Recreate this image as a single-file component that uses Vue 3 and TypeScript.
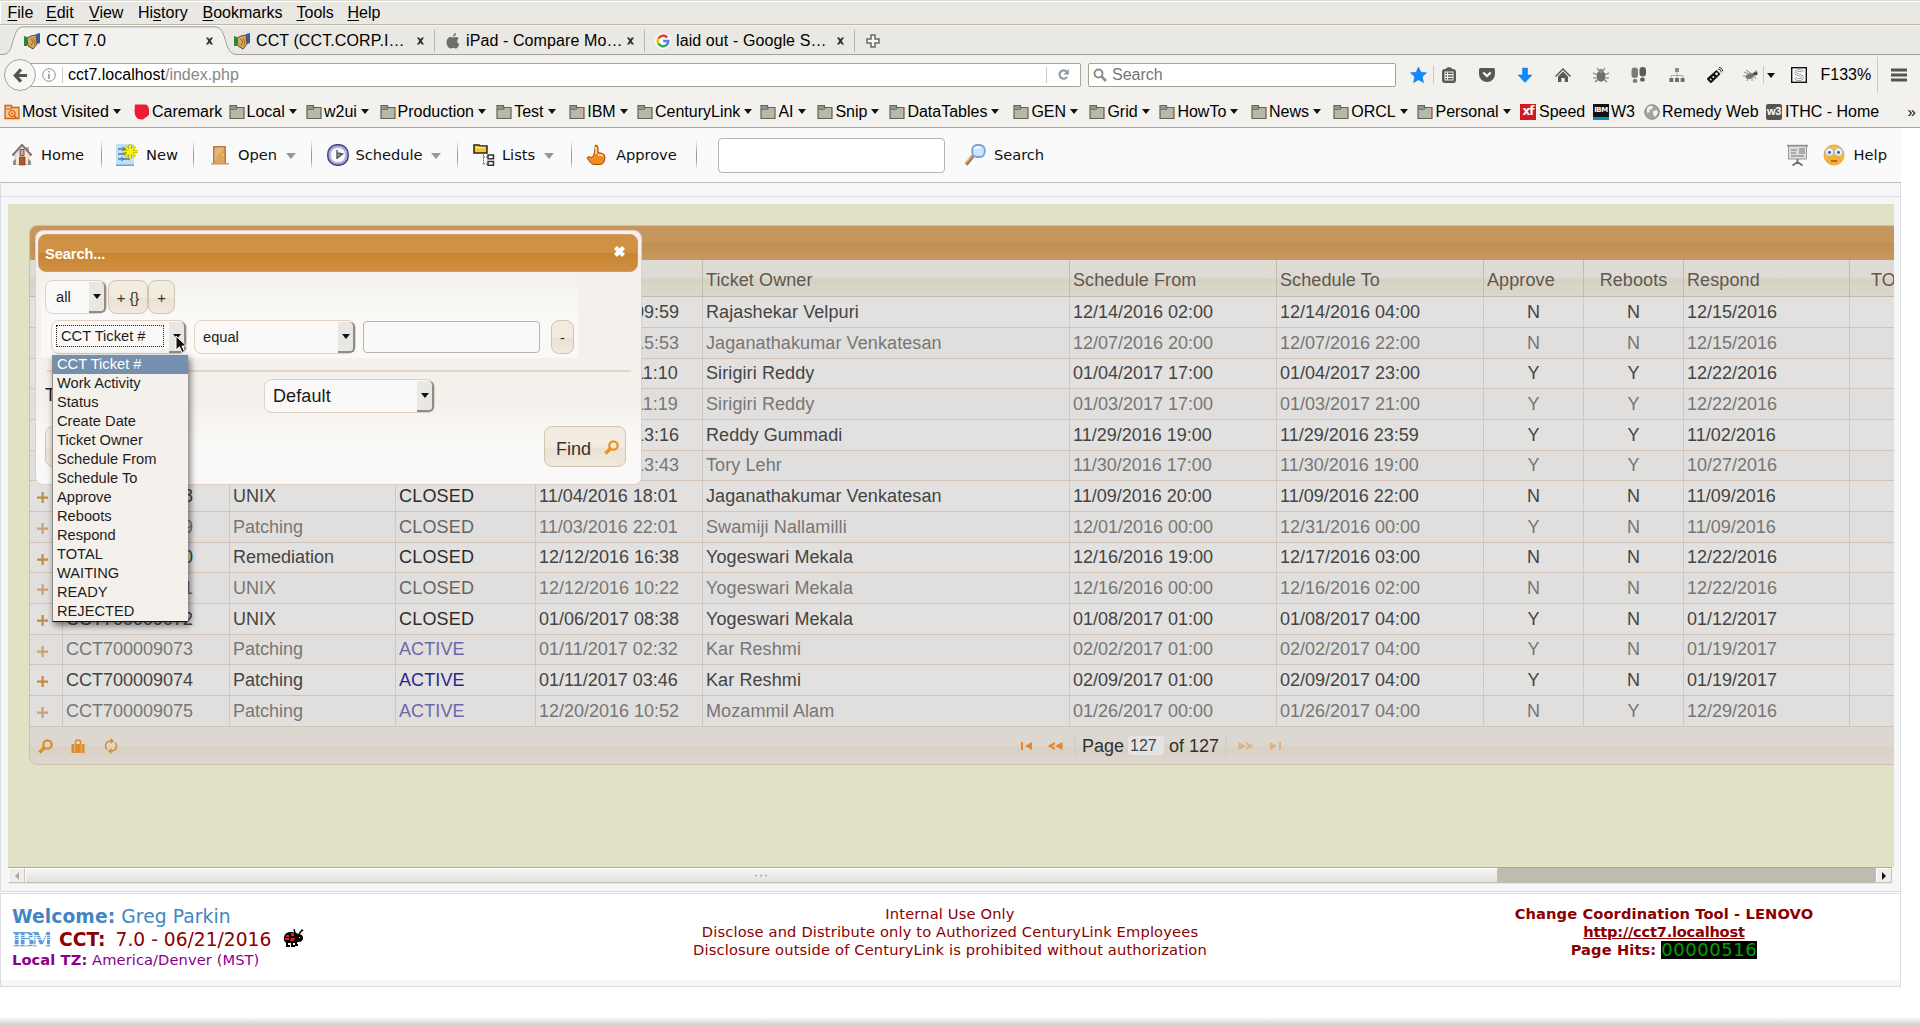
<script setup lang="ts">
interface Slot { label: string; width: number; key?: number }
interface Bookmark { label: string; width: number; icon: string; menu?: boolean; gap?: number }
interface Ticket {
  id: string; activity: string; status: string; created: string; owner: string
  from: string; to: string; approve: string; reboots: string; respond: string
}

const menus: Slot[] = [
  { label: 'File', width: 38.5, key: 0 },
  { label: 'Edit', width: 43, key: 0 },
  { label: 'View', width: 49, key: 0 },
  { label: 'History', width: 64.5, key: 2 },
  { label: 'Bookmarks', width: 94, key: 0 },
  { label: 'Tools', width: 51, key: 0 },
  { label: 'Help', width: 50, key: 0 },
]

const bookmarks: Bookmark[] = [
  { label: 'Most Visited', width: 130, icon: 'visited', menu: true },
  { label: 'Caremark', width: 94.5, icon: 'caremark' },
  { label: 'Local', width: 77.5, icon: 'folder', menu: true },
  { label: 'w2ui', width: 73.5, icon: 'folder', menu: true },
  { label: 'Production', width: 116.7, icon: 'folder', menu: true },
  { label: 'Test', width: 73, icon: 'folder', menu: true },
  { label: 'IBM', width: 67.8, icon: 'folder', menu: true },
  { label: 'CenturyLink', width: 123.4, icon: 'folder', menu: true },
  { label: 'AI', width: 57, icon: 'folder', menu: true },
  { label: 'Snip', width: 72, icon: 'folder', menu: true },
  { label: 'DataTables', width: 124, icon: 'folder', menu: true },
  { label: 'GEN', width: 76, icon: 'folder', menu: true },
  { label: 'Grid', width: 70, icon: 'folder', menu: true },
  { label: 'HowTo', width: 91.6, icon: 'folder', menu: true },
  { label: 'News', width: 82.3, icon: 'folder', menu: true },
  { label: 'ORCL', width: 84.2, icon: 'folder', menu: true },
  { label: 'Personal', width: 102.5, icon: 'folder', menu: true },
  { label: 'Speed', width: 73, icon: 'xf', gap: 3 },
  { label: 'W3', width: 51, icon: 'ibm' },
  { label: 'Remedy Web', width: 122, icon: 'globe' },
  { label: 'ITHC - Home', width: 141.5, icon: 'w3', gap: 3 },
]

const columns = [33, 167, 166, 140, 167, 367, 207, 207, 100, 100, 166, 100]
const gridTemplate = columns.map((w) => `${w}px`).join(' ')
const heads = ['', 'CCT Ticket #', 'Work Activity', 'Status', 'Create Date', 'Ticket Owner',
  'Schedule From', 'Schedule To', 'Approve', 'Reboots', 'Respond', 'TOTAL']

const t = (n: number, activity: string, status: string, created: string, owner: string,
  from: string, to: string, approve: string, reboots: string, respond: string): Ticket =>
  ({ id: `CCT7000090${n}`, activity, status, created, owner, from, to, approve, reboots, respond })

const tickets: Ticket[] = [
  t(62, 'UNIX', 'CLOSED', '12/07/2016 09:59', 'Rajashekar Velpuri', '12/14/2016 02:00', '12/14/2016 04:00', 'N', 'N', '12/15/2016'),
  t(63, 'UNIX', 'CLOSED', '12/06/2016 15:53', 'Jaganathakumar Venkatesan', '12/07/2016 20:00', '12/07/2016 22:00', 'N', 'N', '12/15/2016'),
  t(64, 'Patching', 'CLOSED', '12/15/2016 11:10', 'Sirigiri Reddy', '01/04/2017 17:00', '01/04/2017 23:00', 'Y', 'Y', '12/22/2016'),
  t(65, 'Patching', 'CLOSED', '12/15/2016 11:19', 'Sirigiri Reddy', '01/03/2017 17:00', '01/03/2017 21:00', 'Y', 'Y', '12/22/2016'),
  t(66, 'Patching', 'CLOSED', '10/26/2016 13:16', 'Reddy Gummadi', '11/29/2016 19:00', '11/29/2016 23:59', 'Y', 'Y', '11/02/2016'),
  t(67, 'Patching', 'CLOSED', '10/20/2016 13:43', 'Tory Lehr', '11/30/2016 17:00', '11/30/2016 19:00', 'Y', 'Y', '10/27/2016'),
  t(68, 'UNIX', 'CLOSED', '11/04/2016 18:01', 'Jaganathakumar Venkatesan', '11/09/2016 20:00', '11/09/2016 22:00', 'N', 'N', '11/09/2016'),
  t(69, 'Patching', 'CLOSED', '11/03/2016 22:01', 'Swamiji Nallamilli', '12/01/2016 00:00', '12/31/2016 00:00', 'Y', 'N', '11/09/2016'),
  t(70, 'Remediation', 'CLOSED', '12/12/2016 16:38', 'Yogeswari Mekala', '12/16/2016 19:00', '12/17/2016 03:00', 'N', 'N', '12/22/2016'),
  t(71, 'UNIX', 'CLOSED', '12/12/2016 10:22', 'Yogeswari Mekala', '12/16/2016 00:00', '12/16/2016 02:00', 'N', 'N', '12/22/2016'),
  t(72, 'UNIX', 'CLOSED', '01/06/2017 08:38', 'Yogeswari Mekala', '01/08/2017 01:00', '01/08/2017 04:00', 'Y', 'N', '01/12/2017'),
  t(73, 'Patching', 'ACTIVE', '01/11/2017 02:32', 'Kar Reshmi', '02/02/2017 01:00', '02/02/2017 04:00', 'Y', 'N', '01/19/2017'),
  t(74, 'Patching', 'ACTIVE', '01/11/2017 03:46', 'Kar Reshmi', '02/09/2017 01:00', '02/09/2017 04:00', 'Y', 'N', '01/19/2017'),
  t(75, 'Patching', 'ACTIVE', '12/20/2016 10:52', 'Mozammil Alam', '01/26/2017 00:00', '01/26/2017 04:00', 'N', 'Y', '12/29/2016'),
]

const fields = ['CCT Ticket #', 'Work Activity', 'Status', 'Create Date', 'Ticket Owner', 'Schedule From',
  'Schedule To', 'Approve', 'Reboots', 'Respond', 'TOTAL', 'WAITING', 'READY', 'REJECTED']

const icons: Record<string, string> = {
  hands: '<path d="M0 3l3 1v9H0z" fill="#1f8f3a"/><path d="M12 1l4-1v10l-3 1z" fill="#2a5fc0"/><path d="M3 5l4-2 5-1 1 9-4 5-5-3z" fill="#d9a662" stroke="#6e4a1c" stroke-width="1"/><path d="M6 6l3 2-2 5M9 5l2 3-1 4" fill="none" stroke="#8a5f2a" stroke-width=".8"/>',
  apple: '<path d="M11 0c.2 2-1.300 3.500-3 3.600C7.800 2 9.500.3 11 0zM8 4.600c1-.2 1.800-.8 3-.7 1.200 0 2.200.6 2.800 1.500-2.300 1.400-1.900 4.600.5 5.500-.6 1.800-2 4.600-3.500 4.600-1 0-1.500-.6-2.600-.6s-1.700.6-2.600.6C3.500 15.500 1.500 12 1.500 9c0-3 2-5 4-5 1 0 1.700.6 2.500.6z" fill="#6d6d6d"/>',
  google: '<circle cx="8" cy="8" r="8" fill="#fff"/><g fill="none" stroke-width="2.600"><path d="M12.200 4.600A5.300 5.300 0 0 0 3.400 5.500" stroke="#e94235"/><path d="M3.400 5.400a5.300 5.300 0 0 0 0 5.200" stroke="#fabb05"/><path d="M3.400 10.500a5.300 5.300 0 0 0 8 1.600" stroke="#34a853"/><path d="M11.300 12.200A5.300 5.300 0 0 0 13.300 8H8.200" stroke="#4285f4"/></g>',
  close: '<path d="M1 1h2.500L5 3l1.500-2H9L6.300 5 9 9H6.500L5 7 3.500 9H1l2.700-4z" fill="#2e3436"/>',
  add: '<path d="M5 1h4v4h4v4H9v4H5V9H1V5h4z" fill="#f7f7f5" stroke="#6c6b66" stroke-width="1.500"/>',
  back: '<path d="M8.500 1.500L2.500 8l6 6.500M3 8h12" fill="none" stroke="#545450" stroke-width="3.400"/>',
  info: '<circle cx="7" cy="7" r="6.300" fill="none" stroke="#8f8f8f" stroke-width="1"/><path d="M7 3v1.600M7 6v5" stroke="#8f8f8f" stroke-width="1.500"/>',
  reload: '<path d="M10.500 4A4.500 4.500 0 1 0 11 9.500" fill="none" stroke="#8a9aa5" stroke-width="2.200"/><path d="M12.800 1v6H7z" fill="#8a9aa5"/>',
  glass: '<circle cx="5.500" cy="5.500" r="4" fill="none" stroke="#8c8c8a" stroke-width="2"/><path d="M8.500 8.500L13 13" stroke="#8c8c8a" stroke-width="2.600"/>',
  star: '<path d="M8 0l2.300 5.200 5.700.6-4.200 3.900 1.200 5.900L8 12.700l-5 2.900 1.200-5.900L0 5.800l5.700-.6z" fill="#0d8bfd" stroke="#0a6cd0" stroke-width=".5"/>',
  clip: '<path d="M4 2h1c0-2.500 6-2.500 6 0h1c2 0 3 1 3 3v8c0 2-1 3-3 3H4c-2 0-3-1-3-3V5c0-2 1-3 3-3z" fill="#595853"/><path d="M3.500 4.500h9v9h-9z" fill="#f2f1ee"/><path d="M4.500 6.300h1.500M7 6.300h4.700M4.500 9h1.500M7 9h4.700M4.500 11.700h1.500M7 11.700h4.700" stroke="#595853" stroke-width="1.500"/>',
  pocket: '<path d="M1.500 1h13q1.500 0 1.500 1.500V7a8 8 0 0 1-16 0V2.500Q0 1 1.500 1z" fill="#595853"/><path d="M4.300 5.500L8 9l3.700-3.500" fill="none" stroke="#fff" stroke-width="2.200"/>',
  down: '<path d="M5.500 1h5v7H15l-7 7.500L1 8h4.500z" fill="#0d8bfd" stroke="#0a74dd" stroke-width=".5"/>',
  house: '<path d="M0 9L8 1l8 8-1 1-7-7-7 7z" fill="#595853"/><path d="M3 9.500l5-5 5 5V15H9.700v-4H6.300v4H3z" fill="#595853"/>',
  bug: '<ellipse cx="8" cy="9" rx="4.300" ry="5.700" fill="#6e6e6a"/><path d="M8 4v10M4 1l3 4M12 1L9 5M0 6l5 2M0 11h5M2 15l3.500-3M16 6l-5 2M16 11h-5M14 15l-3.500-3" stroke="#777" stroke-width="1.100"/><circle cx="8" cy="4" r="2.300" fill="#8c8c88"/>',
  feet: '<rect x="0.500" y="0.500" width="6.500" height="10.500" rx="3.200" fill="#7a7a78"/><rect x="1.800" y="12" width="4.500" height="3.800" rx="1.500" fill="#7a7a78"/><rect x="8.500" y="0" width="6.500" height="9.500" rx="3.200" fill="#5c5c5a"/><rect x="9.200" y="10.500" width="4.500" height="4" rx="1.500" fill="#5c5c5a"/>',
  tree: '<path d="M6 1h4v4H6z" fill="#8a8a88"/><path d="M8 5v3.500M2 11V8.500h12V11M8 8v3" fill="none" stroke="#a8a8a5" stroke-width="1"/><path d="M.5 11h3.800v4H.5zM6 11h4v4H6zM11.700 11h3.800v4h-3.800z" fill="#6c6c6a"/>',
  remote: '<path d="M9.500 3l4 4-8.500 8.500q-1 1-2 0L.5 13q-1-1 0-2z" fill="#111"/><circle cx="9.500" cy="6.800" r="1.400" fill="#eee"/><circle cx="6.300" cy="10" r="1" fill="#eee"/><circle cx="3.700" cy="12.500" r=".9" fill="#eee"/><path d="M11 2q3 0 3.500 3.500M12 .3q3.500.2 3.800 4" fill="none" stroke="#222" stroke-width=".9"/>',
  fly: '<ellipse cx="7" cy="9" rx="4.500" ry="2.600" transform="rotate(-22 7 9)" fill="#6e6e6c"/><circle cx="12.500" cy="6.500" r="2.100" fill="#444"/><path d="M1 5l7 3M3 3l6 4M0 9h5M4 14l2-4M9 14V9M13 12l-3-4M14 3l-2 3" stroke="#8b8b88" stroke-width="1"/>',
  sbox: '<rect x=".7" y=".7" width="14.600" height="14.600" fill="#fff" stroke="#111" stroke-width="1.400"/><path d="M11.500 5.200Q11 3.500 8 3.500 4.700 3.500 4.700 5.700 4.700 7.500 8 8t3.400 2.400Q11.400 12.500 8 12.500 5 12.500 4.500 10.600" fill="none" stroke="#8a8a8a" stroke-width="2.600"/><path d="M11.500 5.200Q11 3.500 8 3.500 4.700 3.500 4.700 5.700 4.700 7.500 8 8t3.400 2.400Q11.400 12.500 8 12.500 5 12.500 4.500 10.600" fill="none" stroke="#fff" stroke-width="1.100"/>',
  burger: '<path d="M0 3h16M0 8h16M0 13h16" stroke="#545450" stroke-width="3.200"/>',
  folder: '<path d="M1 1.500h6.500v2h7.500v11H1z" fill="#b7b8a6" stroke="#62625a" stroke-width="1.200"/><path d="M1.500 5.300h6l1-1.800" fill="none" stroke="#62625a" stroke-width="1"/><path d="M2 2.300h5v2.400H2z" fill="#8f9080"/>',
  visited: '<path d="M1 1.500h6.500v2h7.500v11H1z" fill="#f6c79c" stroke="#d1610b" stroke-width="1.300"/><path d="M1.500 5h6l1-1.500" fill="none" stroke="#d1610b"/><circle cx="8" cy="9.500" r="3" fill="none" stroke="#d1610b" stroke-width="1.200"/><circle cx="8" cy="9.500" r="1" fill="#d1610b"/><path d="M10.300 11.800l2 2" stroke="#d1610b" stroke-width="1.500"/>',
  caremark: '<path d="M1 .5h11q3 1.500 3 5.500v5l-6 4.500q-5 .5-6.500-2Q.5 11 .5 7z" fill="#ef1c34"/>',
  globe: '<circle cx="8" cy="8" r="7.300" fill="#a3a3a1" stroke="#777" stroke-width=".8"/><path d="M3 4q3-3 6-2l-1 3-3 1 1 2-3 1zM9 7l4-1 1 3-3 4-2-3z" fill="#f0f0ee"/>',
  homeColor: '<path d="M15 3h3v6h-3z" fill="#c9a59a"/><path d="M1.500 11.500L11 1l9.500 10.500" fill="#efe3d8" stroke="#7a6a68" stroke-width="2"/><path d="M4 10l7-7.500L18 10v10.500H4z" fill="#f1e5da" stroke="#b9a79c" stroke-width=".6"/><path d="M9 5.500h4v6H9z" fill="#9fb0cf" stroke="#8c5335"/><path d="M8.500 13h5.500v8H8.500z" fill="#b2562a" stroke="#7d3414" stroke-width=".7"/><path d="M2 17l3-2v6H2zM17 15l3 2v4h-3z" fill="#8b8f87"/>',
  newPage: '<path d="M0 0h18v22H0z" fill="#bfe0fb"/><path d="M0 20.500h18V22H0z" fill="#6aa5de"/><path d="M2 5h10M2 10h9M2 15h12" stroke="#5c7a95" stroke-width="1.300"/><path d="M6 3l3 2-3 2M5 13l3 2-3 2" fill="none" stroke="#5c7a95"/><g stroke="#8a8400" stroke-width="3"><path d="M14 .5v14M7 7.500h14.500M9 2.500l10 10M19 2.500l-10 10"/></g><g stroke="#fbf500" stroke-width="2"><path d="M14 .5v14M7 7.500h14.500M9 2.500l10 10M19 2.500l-10 10"/></g><circle cx="14" cy="7.500" r="3" fill="#fdf21a"/>',
  door: '<path d="M4 2h13v17H4z" fill="#b5783f"/><path d="M5.500 3.500h10V19h-10z" fill="#dba65f"/><path d="M5.500 3.500h10l-10 13z" fill="#e4b679"/><path d="M2 19.800h18" stroke="#caa26f" stroke-width="1.600"/><circle cx="14" cy="11" r="1" fill="#f5d41a"/>',
  clock: '<rect x=".8" y=".8" width="20.400" height="20.400" rx="9" fill="#a3a6d8" stroke="#3f3f7c" stroke-width="1.400"/><rect x="3.600" y="3.600" width="14.800" height="14.800" rx="6.500" fill="#fafafa" stroke="#b9bbdc"/><path d="M10 6v9M10.500 14l5-4-5-1" fill="#999" stroke="#555" stroke-width="1.400"/>',
  lists: '<path d="M1 1h5l1 1h7v7H1z" fill="#f4c43c" stroke="#2d2408" stroke-width="1.500"/><path d="M2.500 3.500h10" stroke="#fbe596" stroke-width="1.500"/><path d="M10.500 10.500v10M10.500 13h4M10.500 20h4" fill="none" stroke="#555" stroke-dasharray="1.500 1"/><path d="M15 11h5.500v3.800H15zM15 17.500h5.500v3.800H15z" fill="#fff" stroke="#333" stroke-width="1.500"/>',
  thumb: '<path d="M9.500 1q2.500 0 2.500 3v4.500l4.500 1q2.500.5 2.500 4l-1 4.500q-1 2.500-4 2.500H8q-3-.5-4-2.500L1 14q1-2.500 4-.5l2.500-1.500 1-4z" fill="#f28a24" stroke="#a34c0b" stroke-width="1"/><path d="M10 3v7M12 11q3-.5 5 1" stroke="#ffd28f" stroke-width="1.800" fill="none"/>',
  lens: '<path d="M2 20.500L9 12" stroke="#b27544" stroke-width="3.600"/><path d="M1.500 19.500L8 11.500" stroke="#e7b685" stroke-width="1.200"/><path d="M8 13l2.500-2.500" stroke="#8a92c0" stroke-width="3"/><rect x="8.200" y="1" width="12.500" height="12" rx="5" fill="#c7e7fd" stroke="#7f9bd8" stroke-width="1.800"/><path d="M11 5q2-2.500 5-1.500" stroke="#fff" stroke-width="2" fill="none"/>',
  board: '<path d="M1.500 1.500h18v13.500h-18z" fill="#dcdcdc" stroke="#9a9a9a"/><path d="M0 .8h21v1.700H0z" fill="#8f8f8f"/><path d="M4 6h6M4 9h5M12 5h6M12 7h6M12 9h6M4 12h13" stroke="#999" stroke-width="1.400"/><path d="M10.500 15v5M5.500 21.500l5-3.500 5 3.500" stroke="#6a6a6a" stroke-width="1.700" fill="none"/>',
  face: '<circle cx="11" cy="11" r="10" fill="#f9c03a" stroke="#dd9422" stroke-width=".8"/><ellipse cx="11" cy="16" rx="8" ry="4.500" fill="#f5a92e" opacity=".7"/><circle cx="6.500" cy="8" r="4.200" fill="#e8edf2" stroke="#9da4a8" stroke-width=".7"/><circle cx="15.500" cy="8" r="4.200" fill="#e8edf2" stroke="#9da4a8" stroke-width=".7"/><circle cx="6.500" cy="8.500" r="1.400" fill="#31619b"/><circle cx="15.500" cy="8.500" r="1.400" fill="#31619b"/><path d="M8 17h6" stroke="#8f4a12" stroke-width="1.400"/>',
  find: '<circle cx="9.500" cy="5.500" r="4.200" fill="none" stroke="currentColor" stroke-width="2.200"/><path d="M6.500 8.500L1.500 13.500" stroke="currentColor" stroke-width="3.400"/>',
  bag: '<path d="M4.500 5V3q0-2 2.500-2t2.500 2v2" fill="none" stroke="currentColor" stroke-width="1.500"/><path d="M.5 5h13v9H.5z" fill="currentColor"/><path d="M3.700 5v9M10.300 5v9" stroke="#e9c89c" stroke-width=".8"/>',
  refresh: '<path d="M7.500 2H6Q1.500 3 1.500 7q0 2 1.500 3.500M6.500 12H8q4.500-1 4.500-5Q12.500 5 11 3.500" fill="none" stroke="currentColor" stroke-width="1.600"/><path d="M6.500-1.200L10 2 6.500 5zM7.500 9L4 12l3.500 3.200z" fill="currentColor"/>',
  first: '<path d="M1 2h2v8H1zM12 2v8L5 6z" fill="currentColor"/>',
  prev: '<path d="M8 2v2.500L5 6l3 1.500V10L.5 6zM15.500 2v8L8 6z" fill="currentColor"/>',
  x: '<path d="M2.500 2.500l8 8M10.500 2.500l-8 8" stroke="#fff" stroke-width="4.200"/>',
  cursor: '<path d="M1 1v14l3.500-3.200L7 17.500l2.500-1L7 11h4.500z" fill="#111" stroke="#fff" stroke-width="1"/>',
  ladybug: '<path d="M12 5l-1-4M16 6l3-4 1 1" stroke="#000" stroke-width="1.400" fill="none"/><path d="M1 9q1-5 7-5t7 2q5 0 5 4t-5 4l-2 1H4Q0 14 1 9z" fill="#000"/><path d="M3 7h3v2H3zM8 5h3v3H8zM2 10h4v2H2zM8 10h4l-1 3H7z" fill="#e81c1c"/><path d="M4 14v4h3M9 14v4h3M13 14v3h2" stroke="#000" stroke-width="2" fill="none"/><path d="M16 9h1v1h-1z" fill="#fff"/>',
}
</script>

<template>
  <div class="window">
    <div class="menubar">
      <span v-for="m in menus" :key="m.label" class="menu" :style="{ width: m.width + 'px' }">{{ m.label.slice(0, m.key) }}<u>{{ m.label.charAt(m.key ?? 0) }}</u>{{ m.label.slice((m.key ?? 0) + 1) }}</span>
    </div>

    <div class="tabstrip">
      <svg class="tabshape" width="260" height="30" viewBox="0 0 260 30">
        <path d="M0 28.500h3C16 28.500 10 .8 24 .8H214C229 .8 222 28.500 237 28.500H260V30H0z" fill="#f2f1ed" />
        <path d="M0 28.500h3C16 28.500 10 .8 24 .8H214C229 .8 222 28.500 237 28.500h23" fill="none" stroke="#a09f98" />
      </svg>
      <div class="tab first">
        <svg class="i16" viewBox="0 0 16 16" v-html="icons.hands" /><span>CCT 7.0</span>
        <svg class="i10" viewBox="0 0 10 10" v-html="icons.close" />
      </div>
      <div class="tab second">
        <svg class="i16" viewBox="0 0 16 16" v-html="icons.hands" /><span>CCT (CCT.CORP.I…</span>
        <svg class="i10" viewBox="0 0 10 10" v-html="icons.close" />
      </div>
      <div class="tab">
        <svg class="i16" viewBox="0 0 16 16" v-html="icons.apple" /><span>iPad - Compare Mo…</span>
        <svg class="i10" viewBox="0 0 10 10" v-html="icons.close" />
      </div>
      <div class="tab">
        <svg class="i16" viewBox="0 0 16 16" v-html="icons.google" /><span>laid out - Google S…</span>
        <svg class="i10" viewBox="0 0 10 10" v-html="icons.close" />
      </div>
      <svg class="newtab" viewBox="0 0 14 14" v-html="icons.add" />
    </div>

    <div class="navbar">
      <div class="back"><svg width="15" height="15" viewBox="0 0 16 16" v-html="icons.back" /></div>
      <div class="urlbar">
        <svg width="14" height="14" viewBox="0 0 14 14" v-html="icons.info" />
        <span class="url">cct7.localhost<em>/index.php</em></span>
        <span class="reload"><svg width="13" height="13" viewBox="0 0 14 14" v-html="icons.reload" /></span>
      </div>
      <div class="searchbar"><svg width="14" height="14" viewBox="0 0 14 14" v-html="icons.glass" /><span>Search</span></div>
      <div class="tools">
        <svg style="width: 17px" viewBox="0 0 16 16" v-html="icons.star" /><i class="rule" />
        <svg v-for="k in ['clip', 'pocket', 'down', 'house', 'bug', 'feet', 'tree', 'remote']" :key="k" class="tool" viewBox="0 0 16 16" v-html="icons[k]" />
        <svg class="fly" viewBox="0 0 16 16" v-html="icons.fly" /><i class="rule" /><b class="caret" />
        <svg class="sbox" viewBox="0 0 16 16" v-html="icons.sbox" /><span class="zoom">F133%</span><i class="rule tall" />
        <svg class="burger" viewBox="0 0 16 16" v-html="icons.burger" />
      </div>
    </div>

    <div class="bookmarks">
      <div v-for="b in bookmarks" :key="b.label" class="bm" :style="{ width: b.width + 'px' }">
        <span v-if="b.icon === 'xf'" class="badge xf">xf</span>
        <span v-else-if="b.icon === 'ibm'" class="badge ibm">IBM</span>
        <span v-else-if="b.icon === 'w3'" class="badge w3">w3</span>
        <svg v-else class="i16" viewBox="0 0 16 16" v-html="icons[b.icon]" />
        <span :style="{ marginLeft: (b.gap ?? 2) + 'px' }">{{ b.label }}</span><b v-if="b.menu" class="caret" />
      </div>
      <span class="more">»</span>
    </div>

    <main class="page">
      <div class="toolbar">
        <div class="act a-home"><svg viewBox="0 0 22 22" v-html="icons.homeColor" />Home</div><i />
        <div class="act a-new"><svg viewBox="0 0 22 22" v-html="icons.newPage" />New</div><i />
        <div class="act a-open"><svg viewBox="0 0 22 22" v-html="icons.door" />Open<b /></div><i />
        <div class="act a-sched"><svg viewBox="0 0 22 22" v-html="icons.clock" />Schedule<b /></div><i />
        <div class="act a-lists"><svg viewBox="0 0 22 22" v-html="icons.lists" />Lists<b /></div><i />
        <div class="act a-appr"><svg viewBox="0 0 22 22" v-html="icons.thumb" />Approve</div><i />
        <div class="query" />
        <div class="act a-find"><svg viewBox="0 0 22 22" v-html="icons.lens" />Search</div>
        <div class="right"><svg viewBox="0 0 22 22" v-html="icons.board" /><svg viewBox="0 0 22 22" v-html="icons.face" />Help</div>
      </div>

      <section class="content">
        <div class="strip" />
        <div class="stage">
          <div class="grid">
            <div class="caption" />
            <div class="row head" :style="{ gridTemplateColumns: gridTemplate }">
              <div v-for="(h, i) in heads" :key="i" :class="{ mid: h === 'Reboots' || h === 'TOTAL' }">{{ h }}</div>
            </div>
            <div v-for="(r, n) in tickets" :key="r.id" class="row" :class="{ alt: n % 2 === 1, short: n % 3 === 2 }" :style="{ gridTemplateColumns: gridTemplate }">
              <div class="plus"><svg width="13" height="13" viewBox="0 0 13 13"><path d="M5.500 1h2.200v4.500H12v2.200H7.700V12H5.500V7.700H1V5.500h4.500z" fill="currentColor" /></svg></div>
              <div>{{ r.id }}</div>
              <div>{{ r.activity }}</div>
              <div :class="r.status.toLowerCase()">{{ r.status }}</div>
              <div>{{ r.created }}</div>
              <div class="owner">{{ r.owner }}</div>
              <div>{{ r.from }}</div>
              <div>{{ r.to }}</div>
              <div class="mid">{{ r.approve }}</div>
              <div class="mid">{{ r.reboots }}</div>
              <div>{{ r.respond }}</div>
              <div />
            </div>
            <div class="pager">
              <div class="pagertools">
                <svg viewBox="0 -1 14 16" v-html="icons.find" /><svg viewBox="0 -1 14 16" v-html="icons.bag" /><svg viewBox="0 -1 14 16" v-html="icons.refresh" />
              </div>
              <div class="paging">
                <svg width="13" height="12" viewBox="0 0 13 12" v-html="icons.first" />
                <svg class="p2" width="16" height="12" viewBox="0 0 16 12" v-html="icons.prev" />
                <i /><span>Page</span><span class="num">127</span><span>of 127</span><i class="i2" />
                <svg class="off" width="16" height="12" viewBox="0 0 16 12" v-html="icons.prev" />
                <svg class="off p4" width="13" height="12" viewBox="0 0 13 12" v-html="icons.first" />
              </div>
            </div>
          </div>

          <div class="dialog">
            <div class="title"><span>Search...</span><svg width="13" height="13" viewBox="0 0 13 13" v-html="icons.x" /></div>
            <div class="rules">
              <div class="line">
                <div class="select s-all"><span>all</span><i><b /></i></div>
                <div class="btn b1">+ {}</div><div class="btn b2">+</div>
              </div>
              <div class="line second">
                <div class="select s-field"><span class="focus">CCT Ticket #</span><i><b /></i>
                  <ul class="options"><li v-for="(f, i) in fields" :key="f" :class="{ on: i === 0 }">{{ f }}</li></ul>
                  <svg class="pointer" width="13" height="19" viewBox="0 0 13 19" v-html="icons.cursor" />
                </div>
                <div class="select s-op"><span>equal</span><i><b /></i></div>
                <div class="value" />
                <div class="btn b3">-</div>
              </div>
            </div>
            <hr>
            <div class="template"><label>Template:</label><div class="select s-tpl"><span>Default</span><i><b /></i></div></div>
            <div class="buttons"><div class="btn big">Reset</div><div class="btn big find">Find<svg width="14" height="15" viewBox="0 0 14 15" v-html="icons.find" /></div></div>
          </div>
        </div>
        <div class="scrollbar">
          <div class="sb"><svg width="6" height="8" viewBox="0 0 6 8"><path d="M5 0v8L1 4z" fill="#aaa89c" /></svg></div>
          <div class="thumb"><span>···</span></div>
          <div class="sb end"><svg width="6" height="8" viewBox="0 0 6 8"><path d="M1 0v8l4-4z" fill="#111" /></svg></div>
        </div>
      </section>

      <footer>
        <div class="who">
          <div class="l1"><strong>Welcome:</strong> Greg Parkin</div>
          <div class="l2"><span class="logo">IBM</span><strong>CCT:</strong><span class="ver">7.0 - 06/21/2016</span><svg width="22" height="19" viewBox="0 0 22 19" v-html="icons.ladybug" /></div>
          <div class="l3"><strong>Local TZ:</strong> America/Denver (MST)</div>
        </div>
        <div class="legal">Internal Use Only<br>Disclose and Distribute only to Authorized CenturyLink Employees<br>Disclosure outside of CenturyLink is prohibited without authorization</div>
        <div class="about"><div>Change Coordination Tool - LENOVO</div><div class="link"><u>http://cct7.localhost</u></div><div class="hits">Page Hits:<span>00000516</span></div></div>
      </footer>
    </main>
    <div class="edge" />
  </div>
</template>

<style>
body { background: #fff; overflow: hidden; }
</style>

<style scoped>
* { box-sizing: border-box; }
.window { width: 1920px; height: 1025px; overflow: hidden; display: flex; flex-direction: column; font: 16px/20px "Liberation Sans", Arial, sans-serif; color: #000; background: #fff; white-space: nowrap; }
svg { display: block; flex: none; overflow: visible; }
.i16 { width: 16px; height: 16px; }
.i10 { width: 9px; height: 10px; }
.caret { flex: none; width: 0; height: 0; border: 4.500px solid transparent; border-top: 5.500px solid #111; border-bottom: 0; }

.menubar { flex: none; height: 25px; display: flex; align-items: center; padding-left: 7.500px; background: #e9e8e3; border-top: 1px solid #dbdad5; border-bottom: 1px solid #bab8a8; box-shadow: inset 1px 1px 0 #fff; }
.menu { flex: none; line-height: 23px; text-underline-offset: 2px; }

.tabstrip { flex: none; height: 30px; display: flex; align-items: center; background: #e9e8e3; border-top: 1px solid #f8f8f5; border-bottom: 1px solid #a09f98; position: relative; padding: 2px 0 0 24px; }
.tabshape { position: absolute; left: 0; top: 0; }
.tab { position: relative; flex: none; height: 22px; width: 210px; padding-left: 10px; display: flex; align-items: center; border-right: 1px solid #b5b4ad; }
.tab span { margin-left: 5px; flex: 1; letter-spacing: .1px; }
.tab.first span, .tab.second span { margin-left: 6px; }
.tab .i10 { margin-right: 9px; }
.tab.first { border: 0; padding-left: 0; }
.tab.first .i10 { margin-right: 20px; }
.tab.second { padding-left: 0; width: 201px; }
.newtab { width: 14px; height: 14px; margin-left: 11px; }

.navbar { flex: none; height: 40px; background: #f2f1ed; display: flex; align-items: center; }
.back { position: relative; z-index: 1; flex: none; margin-left: 4px; width: 32px; height: 32px; border: 1px solid #a5a391; border-radius: 50%; background: #f7f6f2; display: flex; align-items: center; justify-content: center; }
.urlbar { flex: none; margin-left: -14px; width: 1059px; height: 24px; border: 1px solid #a5a391; border-left: 0; border-radius: 0 2px 2px 0; background: #fff; display: flex; align-items: center; padding-left: 20px; }
.url { margin-left: 6px; padding-left: 5px; border-left: 1px solid #ccc; line-height: 16px; flex: 1; }
.url em { font-style: normal; color: #868686; }
.reload { border-left: 1px solid #ccc; height: 16px; width: 34px; padding: 1px 0 0 10px; }
.searchbar { flex: none; margin-left: 7px; width: 308px; height: 24px; border: 1px solid #a5a391; border-radius: 2px; background: #fff; display: flex; align-items: center; padding-left: 4px; color: #757575; }
.searchbar span { margin-left: 5px; }
.tools { display: flex; align-items: center; padding-left: 13.500px; }
.tools svg { height: 16px; }
.rule { flex: none; width: 1px; height: 18px; background: #c8c7c1; margin-left: 6px; }
.tool { width: 16px; margin: 0 0 0 22px; }
.rule + .tool { margin-left: 7px; }
.fly { width: 16px; margin-left: 20px; }
.fly + .rule { margin-left: 4px; }
.tools .caret { margin-left: 3px; }
.sbox { width: 16px; margin-left: 16px; }
.zoom { margin-left: 14px; width: 51px; }
.rule.tall { height: 36px; margin-left: 5px; }
.burger { width: 16px; margin-left: 13px; }

.bookmarks { flex: none; height: 33px; display: flex; align-items: center; padding: 1px 0 0 4px; background: #f2f1ed; border-bottom: 1px solid #a5a391; }
.bm { flex: none; display: flex; align-items: center; }
.bm .caret { margin-left: 4px; }
.badge { width: 16px; height: 16px; color: #fff; font: bold 13px/15px "Liberation Sans", sans-serif; text-align: center; }
.badge.xf { background: #d01a20; font-family: "DejaVu Sans", sans-serif; font-size: 12px; letter-spacing: -1px; }
.badge.ibm { background: #111; border-bottom: 3px solid #0a8fd0; font: bold 7px/12px "DejaVu Sans", sans-serif; letter-spacing: -.5px; }
.badge.w3 { background: #555; border-radius: 2px; font-size: 11px; letter-spacing: -.5px; }
.more { font-size: 15px; line-height: 16px; }

.page { flex: none; width: 1901px; height: 897px; display: flex; flex-direction: column; font-family: "DejaVu Sans", sans-serif; font-size: 14.670px; }
.toolbar { flex: none; height: 55px; display: flex; align-items: center; background: #fafafa; border-bottom: 1px solid #bcbcbc; color: #111; }
.toolbar svg { width: 22px; height: 22px; }
.toolbar > i { flex: none; width: 1px; height: 28px; background: linear-gradient(#f0f0f0, #999 45%, #999 65%, #eee); }
.act { flex: none; display: flex; align-items: center; gap: 7px; padding-left: 15px; letter-spacing: -.05px; }
.act b { width: 0; height: 0; border: 5.500px solid transparent; border-top: 6px solid #8d9aaa; border-bottom: 0; margin-left: 2px; margin-top: 2px; }
.a-home { width: 101px; padding-left: 11px; gap: 8px; }
.a-new { width: 91px; padding-left: 14px; gap: 8px; }
.a-open { width: 117px; }
.a-sched { width: 145px; padding-left: 14.500px; }
.a-lists { width: 113px; }
.a-appr { width: 123.500px; padding-left: 14px; gap: 8px; }
.query { flex: none; margin-left: 21.500px; width: 227px; height: 35px; border: 1px solid #b4b4b4; border-radius: 4px; background: #fff; }
.a-find { padding-left: 19px; gap: 8px; }
.right { margin-left: auto; display: flex; align-items: center; padding-right: 14px; }
.right svg + svg { margin: 0 9px 0 14px; }

.content { flex: none; height: 709px; background: #f5f6f8; border: 1px solid #dcdcdc; border-top: 0; padding: 0 6px 0 7px; display: flex; flex-direction: column; }
.strip { flex: none; height: 14px; margin: 0 -6px 0 -7px; border-bottom: 1px solid #dcdcdc; }
.stage { flex: none; position: relative; margin-top: 7px; height: 663px; background: #e1e1c6; padding: 21px 0 0 21px; overflow: hidden; }
.grid { width: 2200px; height: 540px; border: 1px solid #cdbfb0; border-radius: 8px 0 0 8px; overflow: hidden; font: 18px/30px "Liberation Sans", Arial, sans-serif; color: #444; }
.caption { height: 34px; background: linear-gradient(#c6965f 0 50%, #bf8e52 50%, #c7985f); }
.row { display: grid; height: 31px; background: #e2e1df; border-bottom: 1px solid #d3c3b7; }
.row > div { border-right: 1px solid #d3c7bd; padding-left: 3px; overflow: hidden; }
.row.short { height: 30px; line-height: 29px; }
.row.alt { background: #e0dfdd; color: #777674; }
.row.head { height: 37px; padding: 0; line-height: 41px; color: #5d584f; letter-spacing: .1px; background: linear-gradient(#dedad4 0 48%, #d7d1c4 55%, #dcd7cf); border-color: #c3b8ae; }
.row.head > div { border-color: #c3bab0; }
.row > .owner { letter-spacing: .1px; }
.row > .mid { text-align: center; padding: 0; }
.row > .plus { color: #c18c46; padding: 10px 0 0 6px; }
.row.alt > .plus { color: #c9a271; }
.closed { color: #2c2c2c; letter-spacing: .2px; }
.alt .closed { color: #666563; }
.active { color: #29298c; letter-spacing: .1px; }
.alt .active { color: #6a69a8; }
.pager { position: relative; height: 38px; background: linear-gradient(#dcd8d1 0 45%, #d9d1c4 55%, #ddd8d1); display: flex; align-items: center; color: #303030; }
.pagertools { display: flex; gap: 19px; padding: 0 0 1px 8px; width: 989.500px; color: #dc8b2c; }
.pagertools svg { width: 14px; height: 16px; }
.paging { display: flex; align-items: center; color: #e08a25; line-height: 24px; padding-bottom: 1px; }
.paging span { color: #303030; }
.paging .p2 { margin-left: 14px; }
.paging i { width: 2px; height: 24px; background: #d3d0cb; margin: 0 6.500px 0 11px; }
.paging i.i2 { margin: 0 11px 0 6px; }
.paging .num { width: 36px; height: 19px; margin: 0 5px 0 4px; padding-left: 2px; border-radius: 4px; background: #e4e4e4; font-size: 16px; line-height: 20px; color: #444; }
.paging .off { transform: scaleX(-1); opacity: .45; }
.paging .p4 { margin-left: 15px; }

.dialog { position: absolute; left: 27px; top: 26px; width: 607px; height: 255px; border: 1px solid #e2cfc1; border-radius: 8px; padding: 3px 3px 3px 2px; background: linear-gradient(#f4f1ec 0 68%, #faf9f7 84%); font: 14.670px/32px "Liberation Sans", Arial, sans-serif; color: #1e1b1d; }
.title { height: 38px; display: flex; justify-content: space-between; padding: 0 11px 0 6px; border: 1px solid #d49768; border-radius: 8px; background: linear-gradient(#cf9144 0 50%, #c9832d 51%, #cf9044); color: #fff; font-weight: bold; line-height: 38px; letter-spacing: -.1px; }
.title svg { margin-top: 10px; }
.rules { margin-left: 3px; width: 537px; height: 86px; padding: 8px 0 0 4px; background: linear-gradient(#f4f1ec, #faf9f7 50%); }
.line { display: flex; height: 34px; }
.line.second { margin: 6px 0 0 6px; }
.select { position: relative; flex: none; height: 34px; display: flex; justify-content: space-between; border: 1px solid #e0cfc2; border-radius: 8px; background: #faf9f7; padding: 1px 0 0 10px; line-height: 30px; }
.select > i { width: 17px; height: 31px; background: #e8e7e2; border-right: 2px solid #8d8c86; border-bottom: 2px solid #8d8c86; border-radius: 0 5px 5px 0; display: flex; align-items: center; justify-content: center; }
.select b { width: 0; height: 0; border: 4.500px solid transparent; border-top: 5.500px solid #111; border-bottom: 0; }
.s-all { width: 62px; }
.s-field { width: 136px; padding-left: 4px; }
.focus { border: 1px dotted #222; width: 108px; height: 22px; margin-top: 3px; line-height: 20px; padding-left: 4px; }
.s-op { width: 162px; margin-left: 7px; padding-left: 8px; }
.value { width: 177px; height: 32px; margin: 1px 0 0 7px; border: 1px solid #b5b5b2; border-radius: 4px; background: #faf9f7; }
.btn { flex: none; border: 1px solid #d3c3b2; border-radius: 8px; background: linear-gradient(#f2ebe0 0 50%, #eae2d2 55%, #f0e9dd); text-align: center; line-height: 34px; color: #3a3026; }
.b1 { width: 40px; margin-left: 1px; }
.b2 { width: 27px; }
.b3 { width: 23px; margin-left: 11px; }
.dialog hr { margin: 12px 7px 0 9px; border: 0; height: 2px; background: #e4d3c7; }
.template { display: flex; margin: 7px 0 0 7px; font-size: 18px; }
.template label { width: 219px; line-height: 32px; }
.s-tpl { width: 171px; padding-left: 8px; letter-spacing: .1px; }
.buttons { display: flex; justify-content: space-between; margin: 13px 12px 0 7px; }
.big { width: 82px; height: 41px; font-size: 18px; line-height: 44px; }
.find { display: flex; padding-left: 11px; color: #333; }
.find svg { margin: 13px 0 0 13px; color: #ee8f1f; }
.options { position: absolute; z-index: 2; left: 0; top: 34px; width: 136px; height: 267px; margin: 0; padding: 0; list-style: none; background: #f4f1ec; border-left: 1px solid #8d8c86; border-bottom: 1px solid #111; box-shadow: 2px 3px 7px rgba(0, 0, 0, .55); }
.options li { height: 19px; line-height: 18px; padding-left: 4px; }
.options li.on { background: #7590ae; color: #fff; }
.pointer { position: absolute; z-index: 3; left: 123px; top: 14px; }

.scrollbar { flex: none; height: 17px; display: flex; background: #c0bbb0; border-top: 1px solid #aaa9a2; border-bottom: 1px solid #ebe5df; margin-right: 2px; }
.sb { width: 17px; display: flex; align-items: center; justify-content: center; background: #eeede9; border: 1px solid #c7c4b8; border-top-color: #fff; border-left-color: #fff; }
.sb.end { margin-left: auto; width: 16px; }
.thumb { width: 1473px; background: linear-gradient(#f4f4f1, #e3e2dd); border: 1px solid #c0bdb1; border-top-color: #fff; border-left-color: #fff; text-align: center; }
.thumb span { font: 12px/12px "Liberation Sans", sans-serif; color: #777; letter-spacing: 1px; display: block; }

footer { flex: none; height: 94px; margin-top: 1px; border: 1px solid #dcdcdc; background: linear-gradient(#fff 0 86px, #f5f6f8 86px); padding: 11px 0 0 11px; display: flex; color: #8b0000; line-height: 18px; }
.who { width: 668px; font-size: 18.670px; }
.who div { line-height: 23px; height: 23px; display: flex; align-items: center; white-space: pre; }
.who .l1 { color: #4285c4; letter-spacing: .1px; }
.l2 strong { margin-left: 7px; }
.ver { margin-left: 10px; }
.l2 svg { margin-left: 12px; margin-top: -4px; }
.who .l3 { color: #8b008b; font-size: 14.670px; height: 18px; line-height: 18px; letter-spacing: .08px; }
.logo { width: 40px; font: bold 21px/18px "DejaVu Serif", serif; letter-spacing: -3.500px; color: transparent; background: repeating-linear-gradient(#5c9ad6 0 1.500px, #cfe2f4 1.500px 2.300px); -webkit-background-clip: text; background-clip: text; transform: scaleX(.95); transform-origin: 0 50%; }
.legal { width: 540px; text-align: center; letter-spacing: .15px; }
.about { width: 300px; margin-left: 294px; text-align: center; font-weight: bold; letter-spacing: .1px; }
.about div { height: 18px; line-height: 18px; }
.about .link { line-height: 17px; letter-spacing: -.25px; }
.about .hits { display: flex; justify-content: center; align-items: center; gap: 5px; }
.about .hits span { background: #000; color: #00a000; font: 18px/18px "DejaVu Sans", sans-serif; letter-spacing: .550px; height: 18px; width: 96px; }
.edge { flex: none; height: 8px; margin-top: -8px; position: relative; background: linear-gradient(rgba(200, 200, 200, 0), #d0d0d0); }
</style>
